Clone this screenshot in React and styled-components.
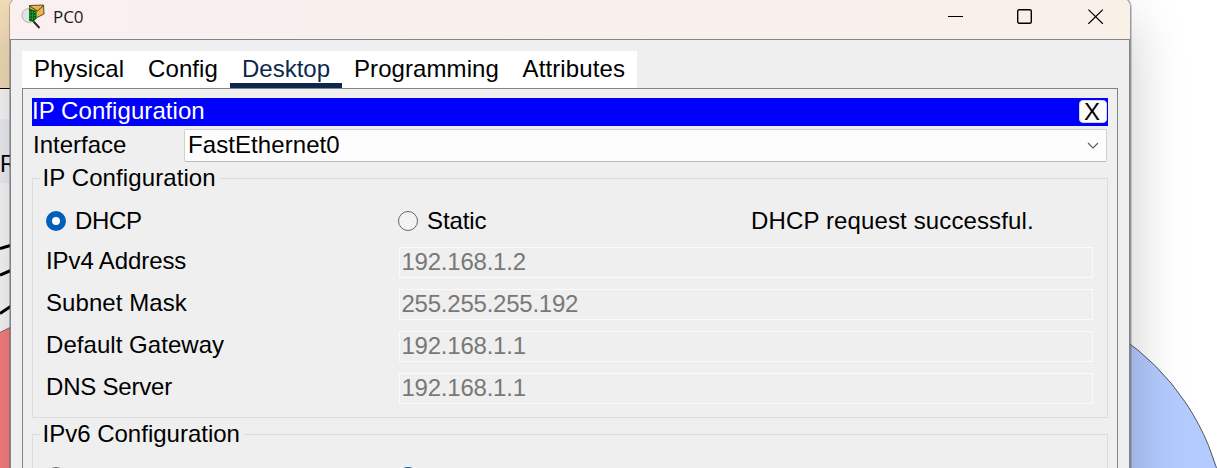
import React from "react";
import styled, { createGlobalStyle } from "styled-components";

const GlobalStyle = createGlobalStyle`
  * { box-sizing: border-box; }
  html, body { margin: 0; padding: 0; background: #fff; overflow: hidden; }
`;

const Screen = styled.main`
  position: relative;
  width: 1217px;
  height: 468px;
  overflow: hidden;
  font-family: "Liberation Sans", Arial, sans-serif;
  font-size: 24px;
  line-height: 28px;
  color: #000;
  white-space: nowrap;
`;

const Canvas = styled.svg`
  position: absolute;
  inset: 0;
`;

const Window = styled.section`
  position: relative;
  width: 1120px;
  height: 560px;
  margin: -2px 0 0 10px;
  border-radius: 9px 9px 0 0;
  background: #efefef;
  box-shadow: 0 0 0 1px rgba(90, 90, 90, 0.4), 1px 0 0 1px rgba(90, 90, 90, 0.28),
    0 24px 56px rgba(0, 0, 0, 0.22);
`;

const TitleBar = styled.header`
  display: flex;
  align-items: center;
  height: 41px;
  padding: 0 26px 3px 11px;
  border-radius: 9px 9px 0 0;
  background: linear-gradient(90deg, #f9f0ef 0%, #f9f0ee 70%, #f9f0e8 100%);
`;

const WindowName = styled.span`
  flex: 1;
  margin-left: 7px;
  padding-bottom: 1px;
  font: 17px/20px "Open Sans", "Noto Sans", sans-serif;
  letter-spacing: -0.1px;
  color: #1b1b1b;
`;

const Controls = styled.div`
  display: flex;
  align-items: center;
  gap: ${(p) => p.$gap}px;
`;

const Body = styled.div`
  height: 519px;
  padding: 11px 11px 0;
  border: 1px solid #80858d;
  border-bottom: 0;
`;

const Tabs = styled.nav`
  display: flex;
  width: 615px;
  height: 37px;
  background: #fff;
`;

const Tab = styled.div`
  width: ${(p) => p.$width}px;
  padding: 4px 0 0 12px;
  letter-spacing: ${(p) => p.$track || 0}px;
  color: ${(p) => (p.$active ? "#0d274d" : "#000")};
  box-shadow: ${(p) => (p.$active ? "inset 0 -5px 0 #0d274d" : "none")};
`;

const Panel = styled.div`
  width: 1096px;
  height: 470px;
  padding: 9px 9px 0;
  border: 1px solid #80858d;
`;

const Banner = styled.div`
  display: flex;
  align-items: center;
  justify-content: space-between;
  height: 28px;
  padding: 0 1px 2px 0;
  background: #0000ff;
  color: #fff;
`;

const CloseButton = styled.button`
  width: 28px;
  height: 23px;
  padding: 0 2px 0 0;
  border: 1px solid #d4d4d4;
  border-radius: 4px;
  background: #fdfdfd;
  color: #000;
  font: 24px/21px "Liberation Sans", Arial, sans-serif;
`;

const InterfaceRow = styled.div`
  display: flex;
  margin-top: 3px;
  height: 33px;
  padding: 0 1px;
`;

const Label = styled.span`
  width: ${(p) => p.$width}px;
  letter-spacing: ${(p) => p.$track || 0}px;
`;

const InterfaceLabel = styled(Label)`
  padding-top: 2px;
`;

const Select = styled.div`
  display: flex;
  flex: 1;
  align-items: center;
  justify-content: space-between;
  height: 33px;
  padding: 0 7px 1px 3px;
  border: 1px solid #d0d0d0;
  border-bottom-color: #b8b8b8;
  border-radius: 2px;
  background: #fdfdfd;
  letter-spacing: 0.08px;
`;

const Group = styled.section`
  height: ${(p) => p.$height}px;
  margin-top: 16px;
  border: 1px solid #dcdcdc;
  padding-left: 7px;
`;

const Legend = styled.div`
  width: ${(p) => p.$width}px;
  height: 28px;
  margin-top: -15px;
  padding-left: 2.5px;
  background: #efefef;
  letter-spacing: ${(p) => p.$track || 0}px;
`;

const ModeRow = styled.div`
  display: flex;
  align-items: center;
  height: 28px;
  margin: 15px 0 0 6px;
`;

const Option = styled.div`
  display: flex;
  align-items: center;
  gap: 9px;
  width: ${(p) => p.$width}px;
  letter-spacing: ${(p) => p.$track || 0}px;
`;

const Radio = styled.span`
  width: 20px;
  height: 20px;
  border: ${(p) => (p.$on ? "6px solid #005fb8" : "1px solid #666")};
  border-radius: 50%;
  background: ${(p) => (p.$on ? "#fff" : "#f3f3f3")};
`;

const Fields = styled.div`
  display: flex;
  flex-direction: column;
  gap: 11px;
  margin: 12px 14px 0 6px;
`;

const FieldRow = styled.div`
  display: flex;
  height: 31px;
`;

const Value = styled.div`
  flex: 1;
  padding-left: 1.5px;
  border: 1px solid #fafafa;
  color: #787878;
  letter-spacing: -0.23px;
`;

const fields = [
  ["IPv4 Address", "192.168.1.2", -0.1],
  ["Subnet Mask", "255.255.255.192", 0.08],
  ["Default Gateway", "192.168.1.1", 0.05],
  ["DNS Server", "192.168.1.1", -0.2],
];

const tabs = [
  ["Physical", 114, 0.1],
  ["Config", 94, 0.1],
  ["Desktop", 112, 0],
  ["Programming", 168.5, 0.08],
  ["Attributes", 126.5, 0.12],
];

function Workspace() {
  return (
    <Canvas width="1217" height="468" viewBox="0 0 1217 468">
      <rect width="12" height="88" fill="#f5deb9" />
      <rect y="88" width="12" height="380" fill="#fcfcfc" />
      <rect y="119" width="12" height="64" fill="#f1f1f9" />
      <path d="M0 88.5H12" stroke="#000" />
      <path d="M0 248.5L12 245M0 275L12 270M0 313.5L12 305.5" stroke="#000" strokeWidth="3" />
      <path d="M-1 333L12 326.5V470H-1Z" fill="#fd8080" stroke="#555" strokeWidth=".8" />
      <text x="0" y="172" fontSize="23" fontFamily="Liberation Sans, sans-serif">R</text>
      <circle cx="983" cy="538.6" r="244" fill="#b3cbff" stroke="#333" strokeWidth=".8" />
    </Canvas>
  );
}

function AppIcon() {
  return (
    <svg width="25" height="26" viewBox="0 1 25 26">
      <path d="M12.5 18.5L18.5 25" stroke="#292929" strokeWidth="2" />
      <circle cx="8" cy="12.5" r="7" fill="#e1e3e0" stroke="#b3b4b1" />
      <path d="M8.5 2.5L22.5 2L23 11L16 14.5L9 10Z" fill="#e8b749" stroke="#342818" strokeWidth=".8" />
      <path d="M8.5 3L16.5 8L22.5 2.5" fill="none" stroke="#4d3716" />
      <path d="M8 5.5L15.5 8V15.5L12 19L8 17.5Z" fill="#075d17" />
      <path d="M9 8V16M11.5 8V17M14 9V15M8 9.5H15M8 12.5H15M8 15.5H14" stroke="#15b936" strokeWidth=".8" strokeDasharray="1.5 1" />
    </svg>
  );
}

export default function App() {
  return (
    <>
      <GlobalStyle />
      <Screen>
        <Workspace />
        <Window>
          <TitleBar>
            <AppIcon />
            <WindowName>PC0</WindowName>
            <Controls $gap={55}>
              <Controls $gap={53}>
                <svg width="16" height="16"><path d="M0 7.5H15" stroke="#000" /></svg>
                <svg width="16" height="16"><rect x="0.7" y="0.7" width="13.6" height="13.6" rx="1.5" fill="none" stroke="#000" strokeWidth="1.4" /></svg>
              </Controls>
              <svg width="16" height="16"><path d="M.4 .6L14.8 14.8M14.8 .6L.4 14.8" stroke="#000" strokeWidth="1.2" /></svg>
            </Controls>
          </TitleBar>
          <Body>
            <Tabs>
              {tabs.map(([name, width, track]) => (
                <Tab key={name} $width={width} $track={track} $active={name === "Desktop"}>{name}</Tab>
              ))}
            </Tabs>
            <Panel>
              <Banner>
                <Label $track={0.07}>IP Configuration</Label>
                <CloseButton>X</CloseButton>
              </Banner>
              <InterfaceRow>
                <InterfaceLabel $width={151}>Interface</InterfaceLabel>
                <Select>
                  FastEthernet0
                  <svg width="12" height="8"><path d="M1 2L6 7L11 2" fill="none" stroke="#5a5a5a" strokeWidth="1.1" /></svg>
                </Select>
              </InterfaceRow>
              <Group $height={240}>
                <Legend $width={180} $track={0.1}>IP Configuration</Legend>
                <ModeRow>
                  <Option $width={352} $track={-0.3}><Radio $on />DHCP</Option>
                  <Option $width={353} $track={-0.1}><Radio />Static</Option>
                  <Label $track={0.13}>DHCP request successful.</Label>
                </ModeRow>
                <Fields>
                  {fields.map(([name, value, track]) => (
                    <FieldRow key={name}>
                      <Label $width={353} $track={track}>{name}</Label>
                      <Value>{value}</Value>
                    </FieldRow>
                  ))}
                </Fields>
              </Group>
              <Group $height={120}>
                <Legend $width={204}>IPv6 Configuration</Legend>
                <ModeRow>
                  <Option $width={352}><Radio /></Option>
                  <Option $width={353}><Radio $on /></Option>
                </ModeRow>
              </Group>
            </Panel>
          </Body>
        </Window>
      </Screen>
    </>
  );
}
